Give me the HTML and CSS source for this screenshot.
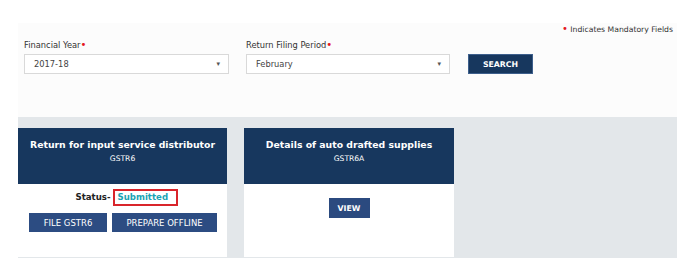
FILE: index.html
```html
<html>
<head>
    <title>Returns Dashboard</title>
    <link rel="stylesheet" href="styles.css">
</head>
<body>
<div class="page">
    <div class="filters">
        <div class="mandatory"><span class="req">&bull;</span> Indicates Mandatory Fields</div>
        <div class="filter-row">
            <div class="field fy">
                <label>Financial Year<span class="req">&bull;</span></label>
                <div class="select"><span>2017-18</span><span class="caret">&#9662;</span></div>
            </div>
            <div class="field period">
                <label>Return Filing Period<span class="req">&bull;</span></label>
                <div class="select"><span>February</span><span class="caret">&#9662;</span></div>
            </div>
            <button class="search-btn">SEARCH</button>
        </div>
    </div>
    <div class="tiles">
        <div class="tile">
            <div class="tile-head">
                <div class="tile-title">Return for input service distributor</div>
                <div class="tile-sub">GSTR6</div>
            </div>
            <div class="tile-body">
                <div class="status">Status-<span class="status-val">Submitted</span></div>
                <div class="actions">
                    <button class="btn btn-file">FILE GSTR6</button>
                    <button class="btn btn-offline">PREPARE OFFLINE</button>
                </div>
            </div>
        </div>
        <div class="tile tile-2">
            <div class="tile-head">
                <div class="tile-title">Details of auto drafted supplies</div>
                <div class="tile-sub">GSTR6A</div>
            </div>
            <div class="tile-body">
                <button class="btn btn-view">VIEW</button>
            </div>
        </div>
    </div>
</div>
</body>
</html>
```

FILE: styles.css
```css
body{
    margin: 0;
    background: #ffffff;
    font-family: "DejaVu Sans", Verdana, sans-serif;
    color: #333333;
}
.page{
    margin: 23px 20px 0 18px;
}
.filters{
    background-color: #fcfcfc;
    height: 94px;
    padding: 0 4px 0 6px;
    box-sizing: border-box;
}
.mandatory{
    text-align: right;
    font-size: 7.7px;
    line-height: 12px;
    color: #333;
}
.req{
    color: #e4161e;
    font-size: 10px;
}
.filter-row{
    display: flex;
    align-items: flex-end;
    margin-top: 3px;
}
.field label{
    display: block;
    font-size: 8.3px;
    line-height: 12px;
    color: #333;
}
.fy{ width: 205px; margin-right: 17px; }
.period{ width: 204px; margin-right: 18px; }
.select{
    margin-top: 3px;
    height: 20px;
    box-sizing: border-box;
    border: 1px solid #d9d9d9;
    background: #ffffff;
    display: flex;
    align-items: center;
    justify-content: space-between;
    padding: 0 8px 0 9px;
    font-size: 8.3px;
    color: #444;
}
.caret{
    font-size: 7px;
    color: #555;
}
.search-btn{
    width: 65px;
    height: 20px;
    background-color: #17375e;
    border: 1px solid #3d5f8c;
    color: #ffffff;
    font-family: "DejaVu Sans", Verdana, sans-serif;
    font-size: 7.8px;
    font-weight: bold;
    padding: 0;
}
.tiles{
    background-color: #e3e7ea;
    display: flex;
    gap: 17px;
    padding: 11px 0 1px 0;
    height: 141px;
    box-sizing: border-box;
}
.tile{
    width: 209px;
    background: #ffffff;
    display: flex;
    flex-direction: column;
}
.tile-2{
    width: 210px;
}
.tile-head{
    background-color: #17375e;
    height: 56px;
    box-sizing: border-box;
    padding-top: 10px;
    color: #ffffff;
    text-align: center;
}
.tile-title{
    font-size: 9.3px;
    font-weight: bold;
    line-height: 14px;
}
.tile-sub{
    font-size: 7.6px;
    line-height: 14px;
}
.tile-body{
    flex: 1;
    text-align: center;
}
.status{
    margin-top: 5px;
    font-size: 8.6px;
    font-weight: bold;
    color: #222;
    line-height: 17px;
    padding-left: 8px;
}
.status-val{
    display: inline-block;
    color: #1aa3b3;
    border: 2px solid #d9252b;
    width: 65px;
    height: 17px;
    box-sizing: border-box;
    text-align: left;
    padding-left: 3px;
    line-height: 13px;
    margin-left: 2px;
    vertical-align: top;
}
.actions{
    display: flex;
    gap: 5px;
    padding-left: 11px;
    margin-top: 7px;
}
.btn{
    height: 19px;
    background-color: #2c4c82;
    border: 0;
    color: #ffffff;
    font-family: "DejaVu Sans", Verdana, sans-serif;
    font-size: 8.5px;
    padding: 0;
}
.btn-file{ width: 78px; }
.btn-offline{ width: 105px; }
.btn-view{
    width: 41px;
    height: 20px;
    margin-top: 14px;
    font-size: 7.8px;
    font-weight: bold;
    background-color: #2b4a7f;
}
```
